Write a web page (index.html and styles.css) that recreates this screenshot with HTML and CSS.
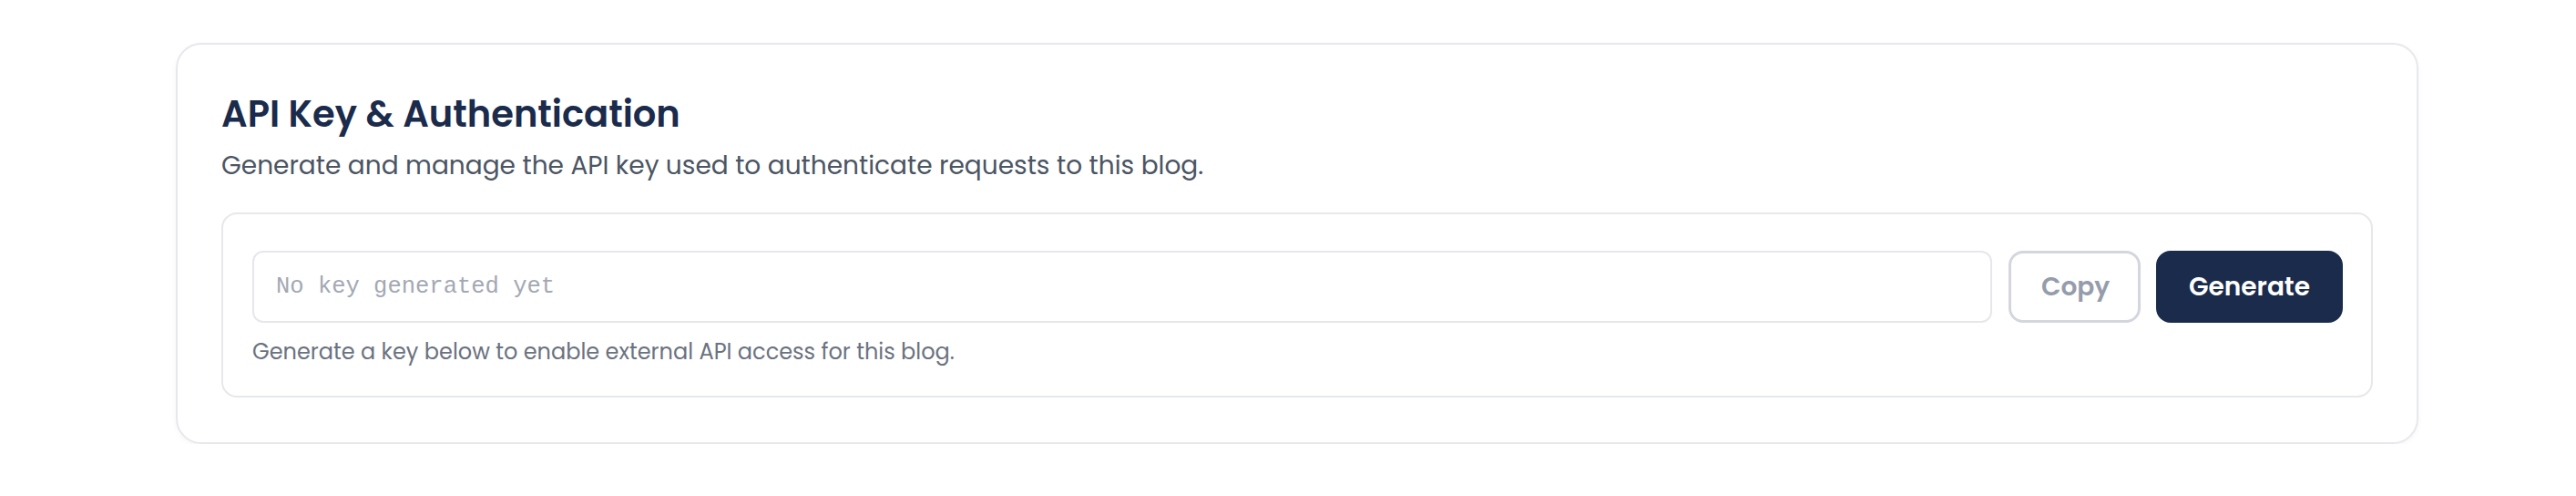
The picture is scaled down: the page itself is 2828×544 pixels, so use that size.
FILE: index.html
```html
<!DOCTYPE html>
<html lang="en">
<head>
<meta charset="utf-8">
<title>API Key &amp; Authentication</title>
<link rel="stylesheet" href="styles.css">
</head>
<body>
<main class="page">
  <section class="card">
    <h2 class="card-title">API Key &amp; Authentication</h2>
    <p class="card-subtitle">Generate and manage the API key used to authenticate requests to this blog.</p>
    <div class="key-box">
      <div class="key-row">
        <input class="key-input" type="text" placeholder="No key generated yet" readonly>
        <button class="btn btn-outline" type="button" disabled>Copy</button>
        <button class="btn btn-primary" type="button">Generate</button>
      </div>
      <p class="key-help">Generate a key below to enable external API access for this blog.</p>
    </div>
  </section>
</main>
</body>
</html>
```
FILE: styles.css
```css
* { box-sizing: border-box; }

html, body {
  margin: 0;
  padding: 0;
  background: #ffffff;
}

body {
  font-family: "Poppins", "Inter", "Noto Sans", sans-serif;
  color: #1b2b4b;
}

.page {
  padding: 47px 0 0 193px;
}

.card {
  width: 2462px;
  background: #ffffff;
  border: 2px solid #e7e8ec;
  border-radius: 28px;
  padding: 50px 48px 49px 48px;
  box-shadow: 0 2px 6px rgba(17, 24, 39, 0.04);
}

.card-title {
  margin: 0;
  font-size: 40px;
  line-height: 52px;
  font-weight: 600;
  color: #1b2b4b;
}

.card-subtitle {
  margin: 11px 0 0 0;
  font-size: 28px;
  line-height: 40px;
  font-weight: 400;
  color: #4b5563;
}

.key-box {
  margin-top: 31px;
  border: 2px solid #e7e8ec;
  border-radius: 17px;
  padding: 40px 31px 32px 32px;
}

.key-row {
  display: flex;
  align-items: stretch;
  gap: 17px;
  height: 79px;
}

.key-input {
  flex: 1;
  min-width: 0;
  margin-right: 1px;
  border: 2px solid #e5e7eb;
  border-radius: 12px;
  padding: 0 24px;
  font-family: "Liberation Mono", "DejaVu Sans Mono", monospace;
  font-size: 25.5px;
  color: #374151;
  background: #ffffff;
  outline: none;
}

.key-input::placeholder {
  color: #a3a8b3;
}

.btn {
  font-family: "Poppins", "Inter", "Noto Sans", sans-serif;
  font-size: 28px;
  font-weight: 600;
  border-radius: 16px;
  padding: 0 33px;
  cursor: pointer;
}

.btn-outline {
  width: 145px;
  background: #ffffff;
  border: 3px solid #d3d6dd;
  color: #959cab;
}

.btn-primary {
  width: 205px;
  background: #1b2b4b;
  border: 3px solid #1b2b4b;
  color: #ffffff;
}

.key-help {
  margin: 16px 0 0 0;
  font-size: 24px;
  line-height: 32px;
  color: #6b7280;
}
```
